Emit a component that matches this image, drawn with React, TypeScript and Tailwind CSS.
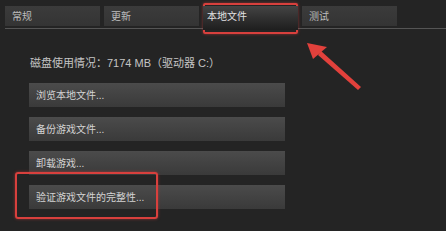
const tabs = ["常规", "更新", "本地文件", "测试"];
const actions = ["浏览本地文件...", "备份游戏文件...", "卸载游戏...", "验证游戏文件的完整性..."];

export default function App() {
  return (
    <div
      className="relative h-[231px] w-[446px] overflow-hidden bg-[#242424] text-[#c9c9c9]"
      style={{ fontFamily: '"Liberation Sans", "Noto Sans CJK SC", sans-serif' }}
    >
      <div className="flex gap-[4px] pl-[5px] pt-[6px]">
        {tabs.map((t, i) =>
          i === 2 ? (
            <div
              key={t}
              className="z-10 h-[24px] w-[95px] bg-gradient-to-b from-[#444] to-[#1e1e1e] pl-[4px] pt-[4px] text-[10px] leading-[14px] text-[#e2e2e2]"
            >
              {t}
            </div>
          ) : (
            <div
              key={t}
              className="flex h-[20px] w-[95px] items-center bg-gradient-to-b from-[#3b3b3b] to-[#343434] pl-[7px] text-[10px] text-[#bdbdbd]"
            >
              {t}
            </div>
          )
        )}
      </div>
      <div className="ml-[5px] mt-[-2px] h-px bg-[#555]" />

      <div className="ml-[30px] mt-[26px] text-[11px] leading-[16px] text-[#c4c4c4]">
        磁盘使用情况：7174 MB（驱动器 C:）
      </div>

      <div className="ml-[29px] mt-[12px] flex w-[256px] flex-col gap-[10px]">
        {actions.map((a) => (
          <div
            key={a}
            className="flex h-[24px] items-center bg-gradient-to-b from-[#4b4b4b] to-[#3a3a3a] pl-[7px] text-[10px] text-[#d4d4d4]"
          >
            {a}
          </div>
        ))}
      </div>

      {/* annotation boxes */}
      <div className="absolute left-[203px] top-[3px] h-[31px] w-[95px] rounded-[2px] border-[2px] border-[#d8403d] shadow-[0_0_3px_rgba(220,60,60,0.6)]" />
      <div className="absolute left-[15px] top-[172px] h-[47px] w-[143px] rounded-[3px] border-[2px] border-[#d8403d] shadow-[0_0_3px_rgba(220,60,60,0.6)]" />

      <svg className="absolute left-0 top-0" width="446" height="231" viewBox="0 0 446 231">
        <polygon points="361,87 358,90 318,55 321,51" fill="#e2413c" />
        <polygon points="307,43 327,47 313,59" fill="#e2413c" />
      </svg>
    </div>
  );
}
